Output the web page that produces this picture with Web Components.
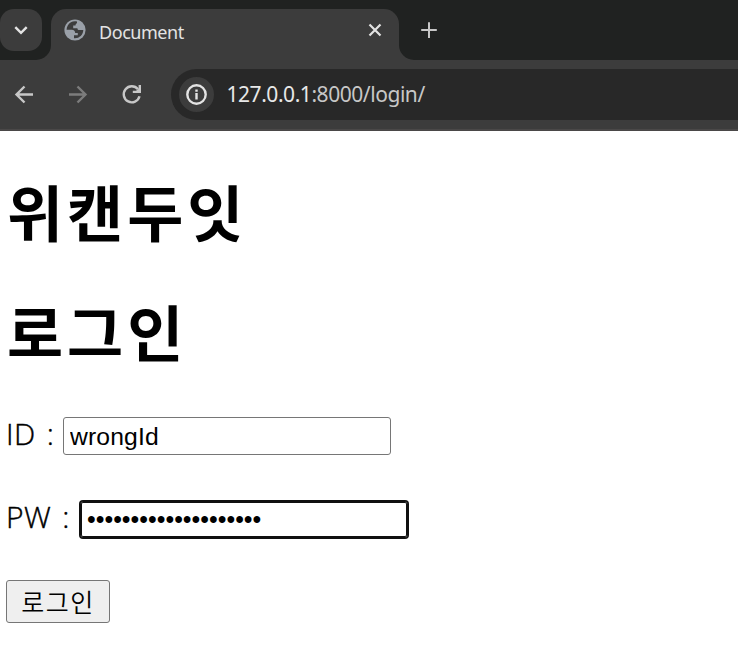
<!DOCTYPE html>
<html lang="ko">
<head>
<meta charset="utf-8">
<title>Document</title>
<style>
html, body { margin: 0; }
body { width: 738px; height: 652px; overflow: hidden; background: #fff; }
</style>
</head>
<body>
<browser-window>
  <tab-strip slot="chrome">Document</tab-strip>
  <nav-bar slot="chrome"><span slot="host">127.0.0.1</span><span slot="path">:8000/login/</span></nav-bar>
  <page-title>위캔두잇</page-title>
  <page-title>로그인</page-title>
  <form-field class="id" label="ID :" type="text" value="wrongId"></form-field>
  <form-field class="pw" label="PW :" type="password" value="wrongpasswordwrongpw" active></form-field>
  <submit-button>로그인</submit-button>
</browser-window>
<script>
function define(name, html, setup) {
  const t = document.createElement('template');
  t.innerHTML = html;
  customElements.define(name, class extends HTMLElement {
    constructor() {
      super();
      this.attachShadow({ mode: 'open' }).append(t.content.cloneNode(true));
    }
    connectedCallback() { if (setup) setup(this, this.shadowRoot); }
  });
}

define('browser-window', `
<style>
:host { display: flex; flex-direction: column; width: 738px; height: 652px; background: #fff; color: #000; }
main { display: flex; flex-direction: column; align-items: flex-start; padding: 43px 0 0 6px; }
</style>
<slot name="chrome"></slot><main><slot></slot></main>`);

define('tab-strip', `
<style>
:host { display: flex; height: 60px; background: #3c3c3c; color: #e3e3e3; font: 18px/24px "Noto Sans", sans-serif; }
svg { display: block; flex: none; }
.search { width: 51px; height: 60px; background: #202221; border-bottom-right-radius: 15px; padding-top: 9px; box-sizing: border-box; }
.search div { width: 42px; height: 42px; border-radius: 14px; background: #3c3c3c; }
.mid { width: 348px; background: #202221; }
.tab { box-sizing: border-box; height: 51px; margin-top: 9px; border-radius: 15px 15px 0 0; background: #3c3c3c; display: flex; padding-left: 13px; }
.title { margin: 11px 0 0 13px; width: 218px; letter-spacing: -.45px; }
.rest { flex: 1; background: #202221; border-bottom-left-radius: 15px; }
.x { margin: 14px 0 0 51px; }
.g { margin-top: 10px; }
.plus { margin: 20px 0 0 20px; }
</style>
<div class="search"><div><svg width="42" height="42" fill="none" stroke="#e3e3e3" stroke-width="2.4"><path d="M15.3 18.2l5.7 5.7 5.7-5.7"/></svg></div></div>
<div class="mid"><div class="tab">
<svg class="g" width="22" height="22" viewBox="0 0 22 22"><circle cx="11" cy="11" r="10.6" fill="#9aa0a8"/><path d="M13 2.600C9.500 1.800 5.800 3 3.900 6.200 3 7.700 2.600 9.200 2.600 10.700h5.200c2.200 0 3.400 1.300 3.400 3.200h2.600v2.400H10v3c4.800.6 9.200-3.200 9.300-8.200h-3.900c-1.300 0-2-.7-2-1.900H9.200V6.600h2.300c0-1.400.5-2 1.500-2.400z" fill="#3c3c3c"/></svg>
<span class="title"><slot></slot></span>
<svg class="x" width="14" height="14" fill="none" stroke="#e3e3e3" stroke-width="2.2"><path d="M1.500 1.500l11 11M12.500 1.500l-11 11"/></svg>
</div></div>
<div class="rest"><svg class="plus" width="20" height="20" fill="none" stroke="#c7c7c7" stroke-width="2"><path d="M10 2.300v15.600M2.200 10h15.600"/></svg></div>`);

define('nav-bar', `
<style>
:host { display: flex; align-items: flex-start; box-sizing: border-box; height: 71px; background: #3c3c3c; border-bottom: 2px solid #4a4848; font: 21px/28px "Noto Sans", sans-serif; }
.icons { display: flex; width: 171px; padding-top: 21px; gap: 26px; padding-left: 10px; box-sizing: border-box; }
svg { display: block; flex: none; fill: none; stroke: #c7c7c7; stroke-width: 2.400; }
.address { flex: 1; display: flex; align-items: center; height: 51px; margin-top: 9px; background: #282828; border-radius: 26px 0 0 26px; box-sizing: border-box; padding-left: 8px; }
.info { width: 35px; height: 35px; border-radius: 50%; background: #3c3c3c; }
.url { margin: -1px 0 0 12.500px; white-space: nowrap; color: #c7c7c7; letter-spacing: -.45px; }
.host { color: #e8e8e8; }
</style>
<div class="icons">
<svg width="28" height="28"><path d="M23 13.500H7M14.500 5.500l-8 8 8 8"/></svg>
<svg width="28" height="28" style="stroke:#7c7c7c"><path d="M5 13.500h16M13.500 5.500l8 8-8 8"/></svg>
<svg width="28" height="28"><path d="M21.500 15.300A8 8 0 1 1 20 8.300"/><path d="M21.800 4v6.900h-7"/><path d="M21 7.500v3h-3.800z" fill="#c7c7c7" stroke="none"/></svg>
</div>
<div class="address"><div class="info"><svg width="35" height="35" style="stroke:#e3e3e3"><circle cx="17.500" cy="17.500" r="9.200"/><path d="M17.500 16v6.500M17.500 12.500v2.300"/></svg></div>
<div class="url"><span class="host"><slot name="host"></slot></span><slot name="path"></slot></div></div>`);

define('page-title', `
<style>
:host { display: block; height: 120px; }
h1 { margin: 0 0 0 1px; font: bold 61px/74px "Noto Sans CJK KR", sans-serif; letter-spacing: 4px; white-space: nowrap; }
</style><h1><slot></slot></h1>`);

define('form-field', `
<style>
:host { display: block; height: 83px; margin-top: 1px; }
:host(.pw) { height: 83px; margin-top: 0; }
label { display: flex; align-items: flex-start; font: 300 30px/38px "Open Sans", sans-serif; white-space: nowrap; }
.name { width: 57px; word-spacing: 3px; letter-spacing: .4px; -webkit-text-stroke: .4px #000; }
:host(.pw) .name { width: 74px; }
input { box-sizing: border-box; width: 328px; height: 38px; margin: 2px 0 0; padding: 2px 6px; border: 1px solid #767676; border-radius: 3px; background: #fff; color: #000; font: 24.9px/30px "Liberation Sans", sans-serif; outline: none; }
:host([active]) input { height: 37px; margin-top: 3px; border: 1px solid #101010; box-shadow: 0 0 0 1px #101010, inset 0 0 0 1px #101010; }
:host([type="text"]) input { font-size: 24.700px; letter-spacing: .15px; padding-top: 3px; }
</style><label><span class="name"></span><input></label>`, (el, root) => {
  root.querySelector('.name').textContent = el.getAttribute('label');
  const input = root.querySelector('input');
  input.type = el.getAttribute('type');
  input.value = el.getAttribute('value');
});

define('submit-button', `
<style>
:host { display: block; }
button { display: block; box-sizing: border-box; width: 104px; height: 43px; margin: -1px 0 0; padding: 0 0 2px; border: 1px solid #767676; border-radius: 3px; background: #efefef; color: #000; font: 350 25px/38px "Noto Sans CJK KR", sans-serif; letter-spacing: 1.500px; }
</style><button><slot></slot></button>`);
</script>
</body>
</html>
